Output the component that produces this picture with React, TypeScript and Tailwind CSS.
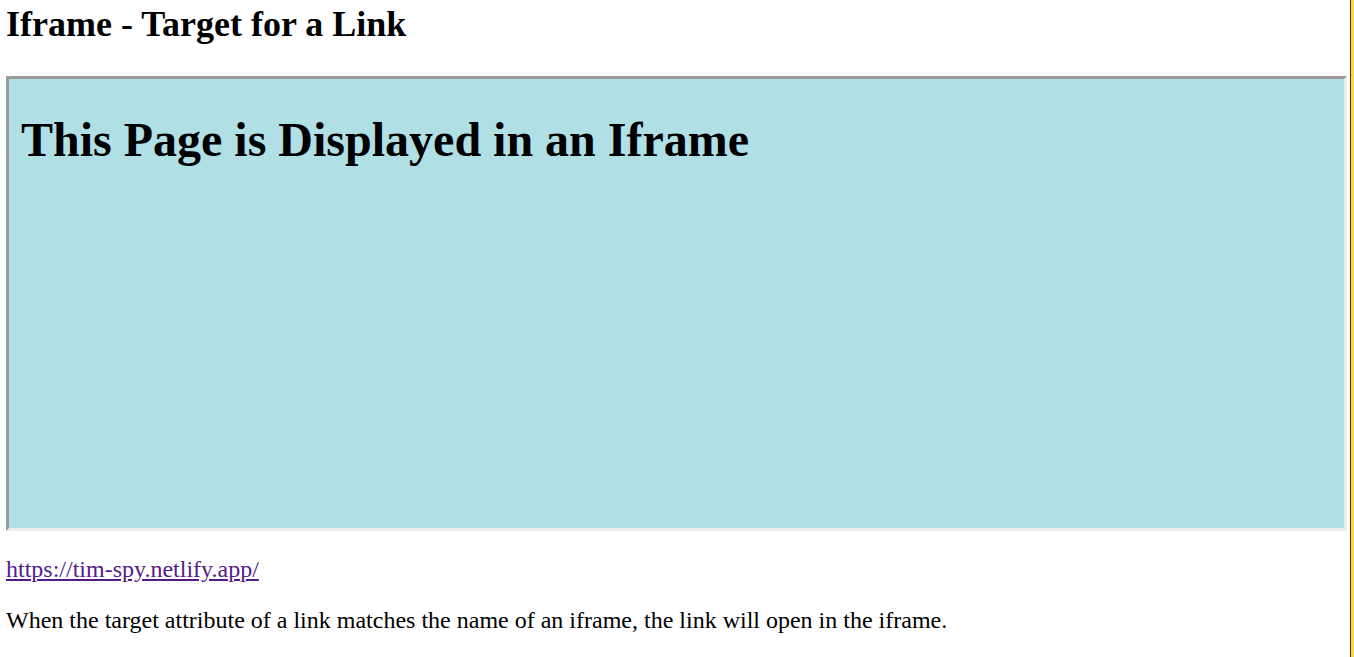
export default function App() {
  return (
    <div className="flex h-[657px] w-[1354px] overflow-hidden bg-white font-['Liberation_Serif','Times_New_Roman',serif] text-black">
      <main className="flex w-[1350px] flex-col pl-[6px]">
        <h2 className="pt-[4px] text-[36px] font-bold leading-[41px]">
          Iframe - Target for a Link
        </h2>

        <div className="mt-[31px] h-[455px] w-[1341px] border-[3px] border-t-[#9a9a9a] border-l-[#9a9a9a] border-b-[#ededed] border-r-[#ededed] bg-[#b0e0e6]">
          <h1 className="pt-[33px] pl-[12px] text-[48px] font-bold leading-[55px]">
            This Page is Displayed in an Iframe
          </h1>
        </div>

        <p className="mt-[25px] text-[24px] leading-[27px]">
          <a href="#" className="text-[#551a8b] underline">
            https://tim-spy.netlify.app/
          </a>
        </p>
        <p className="mt-[24px] text-[24px] leading-[27px]">
          When the target attribute of a link matches the name of an iframe, the link will open in the iframe.
        </p>
      </main>
      <div className="w-px bg-[#333333]" />
      <div className="w-[3px] bg-[#f9dc30]" />
    </div>
  );
}
